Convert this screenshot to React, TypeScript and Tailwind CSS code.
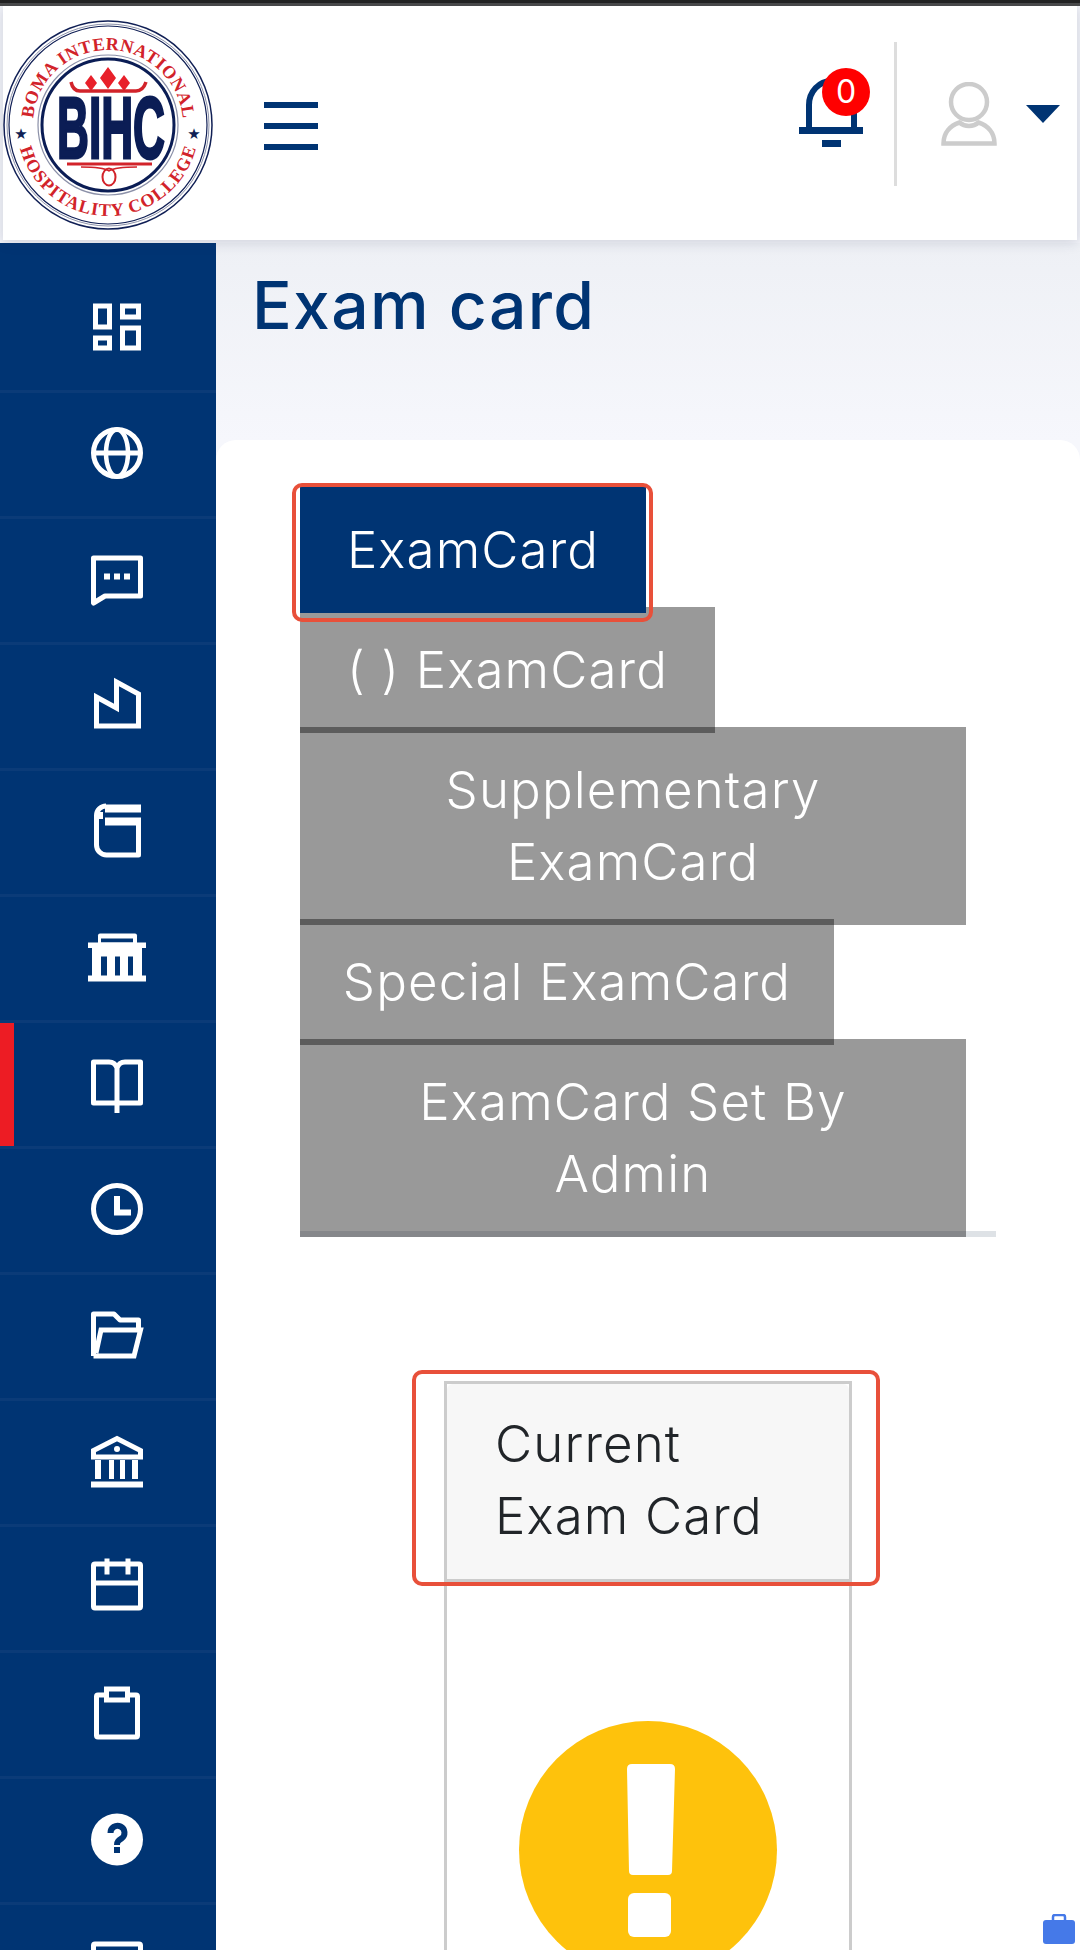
const NAVY = "#003473";

function Logo() {
  return (
    <svg width="210" height="210" viewBox="0 0 210 210" className="mt-[4px] shrink-0">
      <defs>
        <path id="ringTop" d="M30 105a75 75 0 0 1 150 0" />
        <path id="ringBottom" d="M14 105a91 91 0 0 0 182 0" />
      </defs>
      <circle cx="105" cy="105" r="104" fill="#fff" stroke="#101f55" strokeWidth="1.5" />
      <circle cx="105" cy="105" r="101" fill="none" stroke="#8b90a8" strokeWidth="1" />
      <circle cx="105" cy="105" r="99" fill="none" stroke="#101f55" strokeWidth="1.2" />
      <circle cx="105" cy="105" r="70" fill="none" stroke="#8b90a8" strokeWidth="1.2" />
      <circle cx="105" cy="105" r="66" fill="none" stroke="#0b1d55" strokeWidth="3" />
      <text fontFamily="'Liberation Serif', serif" fontWeight="700" fontSize="18" fill="#d2232a">
        <textPath href="#ringTop" startOffset="50%" textAnchor="middle" textLength="222">
          BOMA INTERNATIONAL
        </textPath>
      </text>
      <text fontFamily="'Liberation Serif', serif" fontWeight="700" fontSize="18" fill="#d2232a">
        <textPath href="#ringBottom" startOffset="50%" textAnchor="middle" textLength="238">
          HOSPITALITY COLLEGE
        </textPath>
      </text>
      <text x="18" y="119" textAnchor="middle" fontFamily="'DejaVu Sans', sans-serif" fontSize="15" fill="#101f55">★</text>
      <text x="191" y="119" textAnchor="middle" fontFamily="'DejaVu Sans', sans-serif" fontSize="15" fill="#101f55">★</text>
      <path d="M105 47l8 11-8 11-8-11zM88 55l6 8-6 8-6-8zM121 55l6 8-6 8-6-8z" fill="#e8202a" />
      <path d="M68 62q2 9 9 9h56q7 0 10-9" fill="none" stroke="#d2232a" strokeWidth="3.500" />
      <text
        x="54"
        y="138"
        fontFamily="'Liberation Sans', sans-serif"
        fontWeight="700"
        fontSize="87"
        textLength="108"
        lengthAdjust="spacingAndGlyphs"
        fill="#0b1d55"
        stroke="#0b1d55"
        strokeWidth="3"
      >
        BIHC
      </text>
      <path d="M64 144h85" stroke="#d2232a" strokeWidth="3" />
      <path d="M78 147q22 0 28 4 6-4 28-4" fill="none" stroke="#d2232a" strokeWidth="1.500" />
      <ellipse cx="106" cy="157" rx="6.500" ry="8.500" fill="none" stroke="#d2232a" strokeWidth="2" />
    </svg>
  );
}

function Bell() {
  return (
    <div className="relative mb-[20px] ml-auto h-[70px] w-16">
      <svg width="64" height="70" viewBox="0 0 64 70" fill="none">
        <path d="M10 50V27a22.500 24 0 0 1 45 0v23" stroke={NAVY} strokeWidth="6" />
        <rect x="0" y="49" width="64" height="7" fill={NAVY} />
        <rect x="23" y="62" width="19" height="7" fill={NAVY} />
      </svg>
      <span className="absolute left-[23px] top-[-10px] flex h-12 w-12 items-center justify-center rounded-full bg-[#f00] text-[32px] font-normal text-white">
        0
      </span>
    </div>
  );
}

function UserIcon() {
  return (
    <svg width="56" height="64" viewBox="0 0 56 64" fill="none" stroke="#ccc" strokeWidth="4.500" className="mb-[18px] ml-[44px]">
      <circle cx="28" cy="20" r="18" />
      <path d="M2.500 61.500c0-11 7-18 16-21 5 4.500 14 4.500 19 0 9 3 16 10 16 21z" />
    </svg>
  );
}

const iconProps = {
  width: 64,
  height: 64,
  viewBox: "0 0 64 64",
  fill: "none",
  stroke: "#fff",
  strokeWidth: 5,
};

const ICONS = [
  <svg {...iconProps}>
    <path d="M10.500 11h14v21h-14zM37.500 11h16v11h-16zM10.500 43h14v10h-14zM37.500 33h16v20h-16z" />
  </svg>,
  <svg {...iconProps}>
    <circle cx="32" cy="32" r="23.500" />
    <ellipse cx="32" cy="32" rx="11" ry="23.500" strokeWidth="4.500" />
    <path d="M8 32h48" />
  </svg>,
  <svg {...iconProps}>
    <path d="M8.500 11h47v38H20L8.500 56z" strokeLinejoin="round" />
    <path d="M19 29.500h6M29 29.500h6M39 29.500h6" strokeWidth="6" />
  </svg>,
  <svg {...iconProps}>
    <path d="M11.500 53V24l20 11V9l22 12v32z" />
  </svg>,
  <svg {...iconProps}>
    <path d="M21 7a9.500 9.500 0 0 0-9.500 9.500V46a10 10 0 0 0 10 10H53.500V22" strokeLinejoin="round" />
    <path d="M20 9.500h36M20 22.500h36" strokeWidth="8" />
    <rect x="12" y="13" width="6" height="7" fill="#fff" stroke="none" />
  </svg>,
  <svg width="64" height="64" viewBox="0 0 64 64" fill="#fff">
    <rect x="13" y="8.500" width="39" height="12" rx="2" />
    <rect x="16" y="13.500" width="32" height="4" fill={NAVY} />
    <rect x="3" y="17.500" width="58" height="5.500" />
    <rect x="7" y="23" width="50" height="29" />
    <rect x="3" y="50.500" width="58" height="6" />
    <path d="M16 31.500h6v19h-6zM30 31.500h5v19h-5zM43 31.500h5v19h-5z" fill={NAVY} />
  </svg>,
  <svg {...iconProps}>
    <path d="M32 17q-2-6-8-6H8.500v41h47V11H40q-6 0-8 6v45" strokeLinejoin="round" />
  </svg>,
  <svg {...iconProps}>
    <circle cx="32" cy="32" r="23.500" />
    <path d="M32 19v16.500h14" strokeWidth="6" />
  </svg>,
  <svg {...iconProps}>
    <path d="M8.500 53V11H29l6 6h18.500v10" strokeLinejoin="round" />
    <path d="M8.500 53H49l6.500-26H16L11 50" />
  </svg>,
  <svg {...iconProps}>
    <path d="M8.500 28v-6.500L32 9.500l23.500 12V28z" />
    <circle cx="32" cy="20" r="3" fill="#fff" stroke="none" />
    <path d="M10 31h6v19h-6zM24 31h5v19h-5zM35 31h5v19h-5zM47 31h6v19h-6zM6 52.500h52v6H6z" fill="#fff" stroke="none" />
  </svg>,
  <svg {...iconProps}>
    <rect x="8.500" y="9" width="47" height="44" rx="1.500" />
    <path d="M8 28h48M22 3.500v16M43 3.500v16" />
  </svg>,
  <svg {...iconProps}>
    <rect x="11.500" y="14" width="41" height="42" rx="1.500" />
    <rect x="21.500" y="8" width="21" height="11" fill={NAVY} />
  </svg>,
  <svg width="64" height="64" viewBox="0 0 64 64" fill="none">
    <circle cx="32" cy="32.500" r="26" fill="#fff" />
    <path d="M25.500 26a7 7 0 1 1 11 5.500c-3 2-4.500 3-4.500 6.500" stroke={NAVY} strokeWidth="6" />
    <rect x="29" y="40" width="6" height="6" fill={NAVY} />
  </svg>,
  <svg {...iconProps}>
    <rect x="8.500" y="11" width="47" height="44" rx="1.500" />
  </svg>,
];

function Sidebar() {
  return (
    <aside className="h-[1707px] w-[216px] shrink-0 overflow-hidden bg-[#003473] pt-[24px]">
      {ICONS.map((icon, i) => (
        <div
          key={i}
          className="relative flex h-[126px] items-center justify-center border-b-[3px] border-[#0b3b78] pb-[4px] pl-[18px]"
        >
          {/* active item marker */}
          {i === 6 && <span className="absolute bottom-0 left-0 top-0 w-[14px] bg-[#ed1c24]" />}
          {icon}
        </div>
      ))}
    </aside>
  );
}

const TABS = [
  { label: "( ) ExamCard", size: "w-[415px] px-[16px]" },
  { label: "Supplementary ExamCard", size: "w-[666px] px-[96px]" },
  { label: "Special ExamCard", size: "w-[534px] px-[16px]" },
  { label: "ExamCard Set By Admin", size: "w-[666px] px-[96px]" },
];

function Tabs() {
  return (
    <nav className="flex w-[696px] flex-col items-start border-b-[6px] border-[#dee2e6]">
      <div className="relative z-10 w-[346px] bg-[#003473] py-[27px] text-center text-white">
        ExamCard
        <span className="absolute bottom-[-9px] left-[-8px] right-[-7px] top-[-4px] rounded-[10px] border-4 border-[#e8503a]" />
      </div>
      {TABS.map((tab) => (
        <div
          key={tab.label}
          className={`-mt-[6px] ${tab.size} bg-black/40 py-[27px] text-center text-white last:-mb-[6px]`}
        >
          {tab.label}
        </div>
      ))}
    </nav>
  );
}

function CurrentCard() {
  return (
    <div className="mx-auto mt-[144px] h-[600px] w-[408px] border-[3px] border-[#ccc] border-b-0">
      <div className="relative h-[195px] rounded-t-[6px] bg-[#f7f7f7] px-[48px] py-[24px] text-[#212529]">
        Current
        <br />
        Exam Card
        <span className="absolute bottom-[-3px] left-0 right-0 h-[3px] bg-[#ccc]" />
        <span className="absolute bottom-[-7px] left-[-35px] right-[-31px] top-[-14px] rounded-[10px] border-4 border-[#e8503a]" />
      </div>
      <div className="flex justify-center pt-[141px]">
        <svg width="260" height="260" viewBox="0 0 260 260">
          <circle cx="130" cy="130" r="129" fill="#fec20c" />
          <path d="M109 49q0-5 5-5h38q5 0 5 5l-3 102q0 4-4 4h-35q-4 0-4-4z" fill="#fff" />
          <rect x="110" y="173" width="43" height="44" rx="6" fill="#fff" />
        </svg>
      </div>
    </div>
  );
}

export default function App() {
  return (
    <div className="relative h-[1950px] w-[1080px] overflow-hidden bg-[#f2f3f8] font-['Inter',sans-serif]">
      <div className="h-[3px] bg-[#222]" />
      <div className="h-[3px] bg-[#4a4a4a]" />
      <header className="relative z-10 mx-[3px] flex h-[234px] items-center bg-white shadow-[0_2px_12px_rgba(40,50,90,0.18)]">
        <Logo />
        <div className="ml-[51px] mt-[6px] flex w-[54px] flex-col gap-[15px]">
          <span className="h-[6px] bg-[#003473]" />
          <span className="h-[6px] bg-[#003473]" />
          <span className="h-[6px] bg-[#003473]" />
        </div>
        <Bell />
        <div className="mb-[18px] ml-[31px] h-[144px] w-[3px] bg-[#ddd]" />
        <UserIcon />
        <svg width="34" height="18" viewBox="0 0 34 18" className="mb-[19px] ml-[29px] mr-[17px]">
          <path d="M0 0h34L17 18z" fill={NAVY} />
        </svg>
      </header>
      <div className="mt-[3px] flex">
        <Sidebar />
        <main className="min-w-0 flex-1 bg-gradient-to-b from-[#eef0f5] to-[#f6f7fc] to-[197px]">
          <div className="flex h-[197px] items-start pl-[36px] pt-[22px]">
            <h1 className="text-[66px] font-medium leading-[80px] tracking-[0.02em] text-[#003473]">Exam card</h1>
          </div>
          <section className="h-[1510px] rounded-t-[20px] bg-white pl-[84px] pt-[47px] text-[51px] font-[350] leading-[72px] tracking-[0.022em]">
            <Tabs />
            <div className="w-[696px]">
              <CurrentCard />
            </div>
          </section>
        </main>
      </div>
      {/* floating help widget */}
      <svg width="32" height="30" viewBox="0 0 32 30" className="absolute bottom-[6px] right-[5px]">
        <path d="M10 7V3q0-2 2-2h8q2 0 2 2v4" fill="none" stroke="#4579e8" strokeWidth="2.500" />
        <rect x="0" y="6" width="32" height="24" rx="3" fill="#4579e8" />
      </svg>
    </div>
  );
}
